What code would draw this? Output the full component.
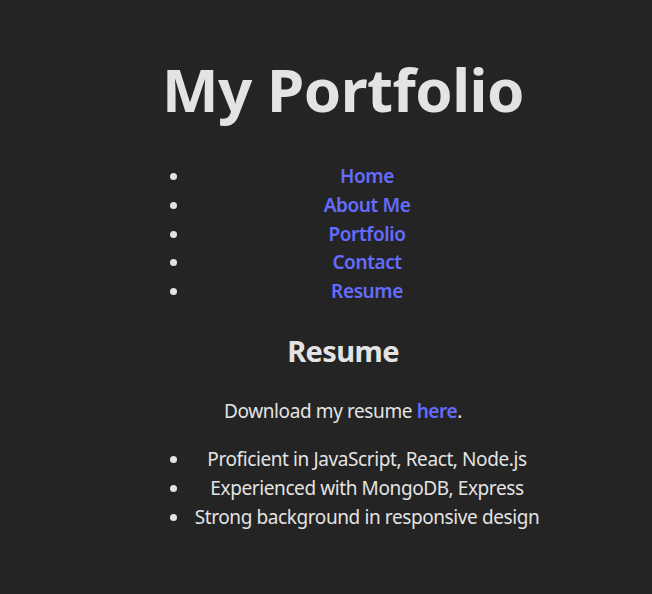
import React from 'react';

const NAV = ['Home', 'About Me', 'Portfolio', 'Contact', 'Resume'];

const SKILLS = [
  'Proficient in JavaScript, React, Node.js',
  'Experienced with MongoDB, Express',
  'Strong background in responsive design',
];

export default function App() {
  return (
    <div
      className="min-h-[594px] bg-[#242424] text-[#e3e3e3]"
      style={{ fontFamily: '"Noto Sans", "Open Sans", sans-serif' }}
    >
      <div className="ml-[142px] w-[402px] pt-[55px] text-center text-[19px] tracking-[-0.4px]">
        {/* Header */}
        <h1 className="text-[60px] font-bold leading-[68px] tracking-[-0.5px]">My Portfolio</h1>

        {/* Nav */}
        <ul className="mt-[39px] list-disc pl-[48px]">
          {NAV.map((item) => (
            <li key={item} className="leading-[28.8px]">
              <a href="#" className="font-semibold text-[#646cff]">
                {item}
              </a>
            </li>
          ))}
        </ul>

        {/* Resume */}
        <h2 className="mt-[23px] text-[29px] font-bold leading-[43px] tracking-[-0.6px]">Resume</h2>
        <p className="mt-[25px] leading-[29px]">
          Download my resume{' '}
          <a href="#" className="font-semibold text-[#646cff]">
            here
          </a>
          .
        </p>

        <ul className="mt-[19px] list-disc pl-[48px]">
          {SKILLS.map((skill) => (
            <li key={skill} className="leading-[28.8px]">
              {skill}
            </li>
          ))}
        </ul>
      </div>
    </div>
  );
}
